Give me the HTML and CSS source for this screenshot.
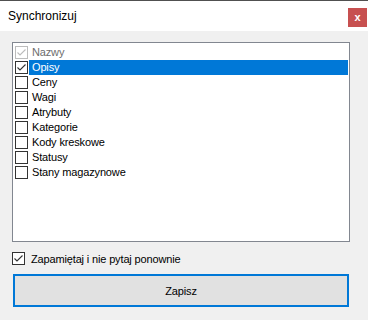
FILE: index.html
```html
<!DOCTYPE html>
<html lang="pl">
<head>
    <meta charset="UTF-8">
    <title>Synchronizuj</title>
    <link rel="stylesheet" href="styles.css">
</head>
<body>

    <div class="window">
        <!-- Title bar -->
        <div class="titlebar">
            <span class="title">Synchronizuj</span>
            <span class="close">x</span>
        </div>

        <div class="content">
            <!-- Checked list -->
            <ul class="checklist">
                <li class="item disabled">
                    <span class="box checked"><svg viewBox="0 0 11 11"><polyline points="1.5,5.5 4,8 9.5,2.5"/></svg></span>
                    <span class="label">Nazwy</span>
                </li>
                <li class="item selected">
                    <span class="box checked"><svg viewBox="0 0 11 11"><polyline points="1.5,5.5 4,8 9.5,2.5"/></svg></span>
                    <span class="label">Opisy</span>
                </li>
                <li class="item"><span class="box"></span><span class="label">Ceny</span></li>
                <li class="item"><span class="box"></span><span class="label">Wagi</span></li>
                <li class="item"><span class="box"></span><span class="label">Atrybuty</span></li>
                <li class="item"><span class="box"></span><span class="label">Kategorie</span></li>
                <li class="item"><span class="box"></span><span class="label">Kody kreskowe</span></li>
                <li class="item"><span class="box"></span><span class="label">Statusy</span></li>
                <li class="item"><span class="box"></span><span class="label">Stany magazynowe</span></li>
            </ul>

            <label class="remember">
                <span class="box checked"><svg viewBox="0 0 11 11"><polyline points="1.5,5.5 4,8 9.5,2.5"/></svg></span>
                <span>Zapamiętaj i nie pytaj ponownie</span>
            </label>

            <button class="save">Zapisz</button>
        </div>
    </div>

</body>
</html>
```

FILE: styles.css
```css
body {
    margin: 0;
    background-color: #f0f0f0;
    font-family: "Liberation Sans", Arial, sans-serif;
    font-size: 11px;
    letter-spacing: -0.15px;
    color: #000;
}

.window {
    width: 368px;
    height: 320px;
    background-color: #f0f0f0;
}

.titlebar {
    height: 30px;
    border-top: 1px solid #505050;
    background-color: #fff;
    display: flex;
    align-items: flex-start;
    justify-content: space-between;
}

.title {
    font-size: 12px;
    letter-spacing: 0;
    margin: 8px 0 0 8px;
}

.close {
    width: 19px;
    height: 19px;
    margin: 7px 1px 0 0;
    background-color: #c75050;
    color: #fff;
    font-weight: bold;
    font-size: 11px;
    line-height: 18px;
    text-align: center;
}

.content {
    padding: 11px 0 0 12px;
}

.checklist {
    list-style: none;
    margin: 0;
    box-sizing: border-box;
    width: 338px;
    height: 200px;
    padding: 2px 1px 0 2px;
    background-color: #fff;
    border: 1px solid #828790;
}

.item {
    display: flex;
    align-items: center;
    height: 15px;
}

.box {
    box-sizing: border-box;
    width: 13px;
    height: 13px;
    border: 1px solid #333;
    background-color: #fff;
    flex-shrink: 0;
}

.box svg {
    display: block;
    width: 11px;
    height: 11px;
}

.box polyline {
    fill: none;
    stroke: #333;
    stroke-width: 1.1;
}

.item .label {
    flex: 1;
    height: 15px;
    line-height: 15px;
    margin-left: 1px;
    padding-left: 3px;
}

.item.disabled .box {
    border-color: #bcbcbc;
}

.item.disabled polyline {
    stroke: #bcbcbc;
}

.item.disabled .label {
    color: #6d6d6d;
}

.item.selected .label {
    background-color: #0078d7;
    color: #fff;
}

.remember {
    display: flex;
    align-items: center;
    gap: 6px;
    height: 13px;
    margin-top: 10px;
}

.save {
    display: block;
    box-sizing: border-box;
    width: 336px;
    height: 33px;
    margin: 9px 0 0 1px;
    background-color: #e1e1e1;
    border: 2px solid #0078d7;
    font-family: "Liberation Sans", Arial, sans-serif;
    font-size: 11px;
    letter-spacing: -0.15px;
    color: #000;
    padding: 0;
}
```
